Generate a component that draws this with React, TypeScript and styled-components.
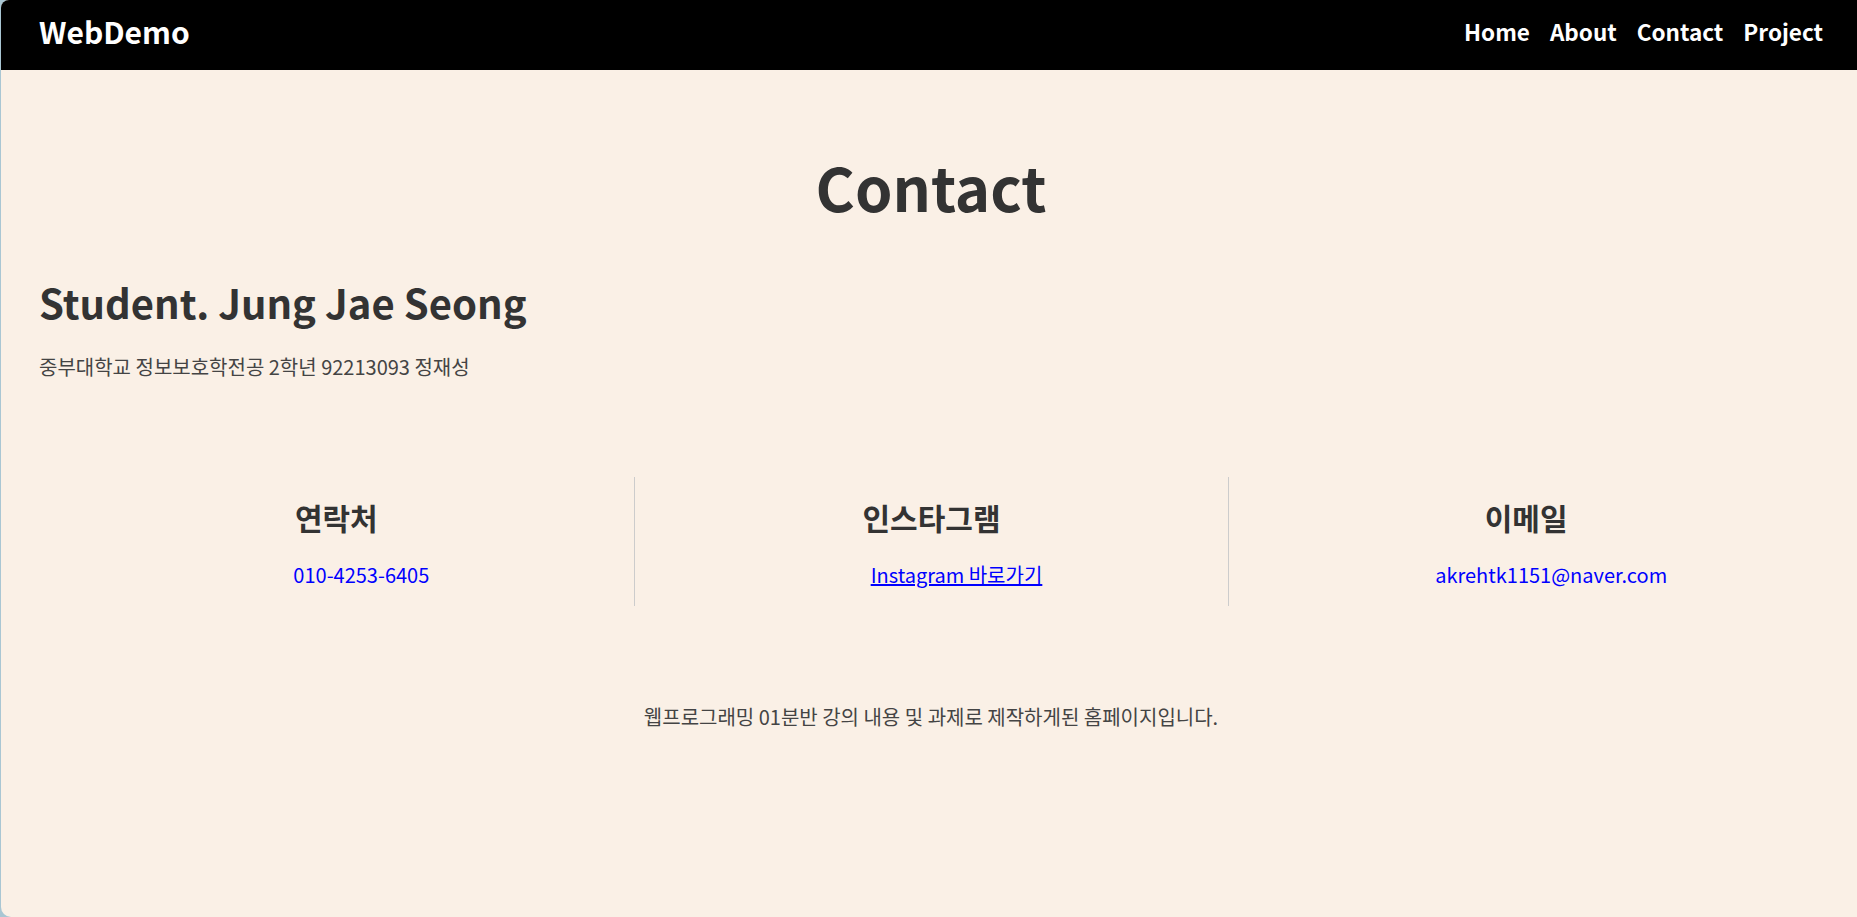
import React from "react";
import styled, { createGlobalStyle } from "styled-components";

const GlobalStyle = createGlobalStyle`
  html, body {
    margin: 0;
    padding: 0;
    background: #a9c6d3;
  }
  body {
    font-family: "Noto Sans CJK KR", "Noto Sans", sans-serif;
  }
  * { box-sizing: border-box; }
`;

const Frame = styled.div`
  min-height: 917px;
  margin-left: 1px;
  background: #faf0e6;
  border-radius: 8px 0 0 10px;
  overflow: hidden;
  display: flex;
  flex-direction: column;
`;

const NavBar = styled.header`
  height: 70px;
  background: #000;
  display: flex;
  align-items: center;
  justify-content: space-between;
  padding: 0 34px 8px 38px;
`;

const Brand = styled.div`
  color: #fff;
  font-weight: 700;
  font-size: 30px;
  line-height: 1;
`;

const NavLinks = styled.nav`
  display: flex;
  gap: 20px;
`;

const NavLink = styled.a`
  color: #fff;
  font-weight: 700;
  font-size: 22.5px;
  line-height: 1;
  text-decoration: none;
`;

const Main = styled.main`
  flex: 1;
  padding: 0 34px 0 38px;
  color: #333;
`;

const PageTitle = styled.h1`
  margin: 80px 0 0;
  text-align: center;
  font-size: 60px;
  font-weight: 700;
  line-height: 72px;
`;

const Name = styled.h2`
  margin: 56px 0 0;
  font-size: 40px;
  font-weight: 700;
  line-height: 48px;
`;

const Affiliation = styled.p`
  margin: 27px 0 0;
  font-size: 20px;
  line-height: 28px;
  color: #444;
`;

const Columns = styled.section`
  margin-top: 96px;
  display: grid;
  grid-template-columns: repeat(3, 1fr);
`;

const Column = styled.div<{ $divider?: boolean }>`
  height: 129px;
  display: flex;
  flex-direction: column;
  align-items: center;
  border-left: ${(p) => (p.$divider ? "1px solid #ccc" : "none")};
`;

const ColumnTitle = styled.h3`
  margin: 21px 0 0;
  font-size: 30px;
  font-weight: 700;
  line-height: 39px;
`;

const LinkLine = styled.p`
  margin: 25px 0 0;
  padding-left: 50px;
  font-size: 20px;
  line-height: 26px;
`;

const InfoLink = styled.a<{ $underline?: boolean }>`
  color: #0000ff;
  text-decoration: ${(p) => (p.$underline ? "underline" : "none")};
`;

const Footer = styled.p`
  margin: 97px 0 0;
  text-align: center;
  font-size: 20px;
  line-height: 28px;
  color: #444;
`;

export default function App() {
  return (
    <>
      <GlobalStyle />
      <Frame>
        <NavBar>
          <Brand>WebDemo</Brand>
          <NavLinks>
            <NavLink href="#">Home</NavLink>
            <NavLink href="#">About</NavLink>
            <NavLink href="#">Contact</NavLink>
            <NavLink href="#">Project</NavLink>
          </NavLinks>
        </NavBar>
        <Main>
          <PageTitle>Contact</PageTitle>
          <Name>Student. Jung Jae Seong</Name>
          <Affiliation>중부대학교 정보보호학전공 2학년 92213093 정재성</Affiliation>
          <Columns>
            <Column>
              <ColumnTitle>연락처</ColumnTitle>
              <LinkLine>
                <InfoLink href="#">010-4253-6405</InfoLink>
              </LinkLine>
            </Column>
            <Column $divider>
              <ColumnTitle>인스타그램</ColumnTitle>
              <LinkLine>
                <InfoLink href="#" $underline>
                  Instagram 바로가기
                </InfoLink>
              </LinkLine>
            </Column>
            <Column $divider>
              <ColumnTitle>이메일</ColumnTitle>
              <LinkLine>
                <InfoLink href="#">akrehtk1151@naver.com</InfoLink>
              </LinkLine>
            </Column>
          </Columns>
          <Footer>웹프로그래밍 01분반 강의 내용 및 과제로 제작하게된 홈페이지입니다.</Footer>
        </Main>
      </Frame>
    </>
  );
}
